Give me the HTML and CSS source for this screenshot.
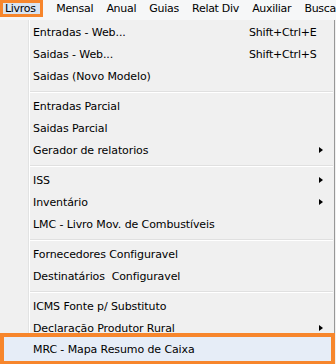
FILE: index.html
```html
<!DOCTYPE html>
<html lang="pt">
<head>
<meta charset="UTF-8">
<link rel="stylesheet" href="styles.css">
<title>Livros</title>
</head>
<body>
  <div class="menubar">
    <span class="top-item marked">Livros</span>
    <span class="top-item">Mensal</span>
    <span class="top-item">Anual</span>
    <span class="top-item">Guias</span>
    <span class="top-item">Relat Div</span>
    <span class="top-item">Auxiliar</span>
    <span class="top-item">Busca</span>
  </div>

  <div class="dropdown">
    <div class="item"><span class="label">Entradas - Web...</span><span class="shortcut">Shift+Ctrl+E</span></div>
    <div class="item"><span class="label">Saidas - Web...</span><span class="shortcut">Shift+Ctrl+S</span></div>
    <div class="item"><span class="label">Saidas (Novo Modelo)</span></div>
    <div class="sep"></div>
    <div class="item"><span class="label">Entradas Parcial</span></div>
    <div class="item"><span class="label">Saidas Parcial</span></div>
    <div class="item sub"><span class="label">Gerador de relatorios</span></div>
    <div class="sep"></div>
    <div class="item sub"><span class="label">ISS</span></div>
    <div class="item sub"><span class="label">Inventário</span></div>
    <div class="item"><span class="label">LMC - Livro Mov. de Combustíveis</span></div>
    <div class="sep"></div>
    <div class="item"><span class="label">Fornecedores Configuravel</span></div>
    <div class="item"><span class="label">Destinatários&nbsp; Configuravel</span></div>
    <div class="sep"></div>
    <div class="item"><span class="label">ICMS Fonte p/ Substituto</span></div>
    <div class="item sub"><span class="label">Declaração Produtor Rural</span></div>
    <div class="item marked"><span class="label">MRC - Mapa Resumo de Caixa</span></div>
  </div>
</body>
</html>
```

FILE: styles.css
```css
body {
  margin: 0;
  width: 336px;
  height: 364px;
  overflow: hidden;
  background-color: #f0f0f0;
  font-family: "DejaVu Sans", Tahoma, sans-serif;
  font-size: 11px;
  color: #000;
}

.menubar {
  height: 20px;
  display: flex;
  justify-content: space-between;
  background-color: #f6f7f8;
  white-space: nowrap;
}

.top-item {
  height: 17px;
  line-height: 17px;
  letter-spacing: -0.3px;
}

.top-item.marked {
  width: 38px;
  padding-left: 5px;
  background-color: #d9e4f1;
  box-shadow: inset 0 0 0 3px #f7862c;
}

.dropdown {
  width: 334px;
  height: 343px;
  padding-top: 1px;
  border-right: 1px solid #979797;
  background: linear-gradient(to right, #f0f0f0 28px, #e2e3e3 28px, #e2e3e3 29px, #fff 29px, #fff 30px, #f0f0f0 30px);
}

.item {
  position: relative;
  height: 22px;
  display: flex;
  align-items: center;
  padding-left: 33px;
  padding-right: 18px;
  letter-spacing: -0.1px;
  white-space: nowrap;
}

.item .label {
  flex: 1;
}

.item .shortcut {
  width: 67px;
  letter-spacing: -0.2px;
}

.item.sub::after {
  content: "";
  position: absolute;
  right: 11px;
  top: 8px;
  border-left: 4px solid #000;
  border-top: 3.5px solid transparent;
  border-bottom: 3.5px solid transparent;
}

.item.marked {
  margin-top: -2px;
  height: 24px;
  background-color: #e6edf7;
  box-shadow: 0 0 0 4px #f7862c;
  margin-left: 4px;
  margin-right: 3px;
  padding-left: 29px;
}

.sep {
  height: 8px;
  margin-left: 30px;
  margin-right: 1px;
  background: linear-gradient(#f0f0f0 4px, #e0e0e0 4px, #e0e0e0 5px, #fff 5px, #fff 6px, #f0f0f0 6px);
}
```
